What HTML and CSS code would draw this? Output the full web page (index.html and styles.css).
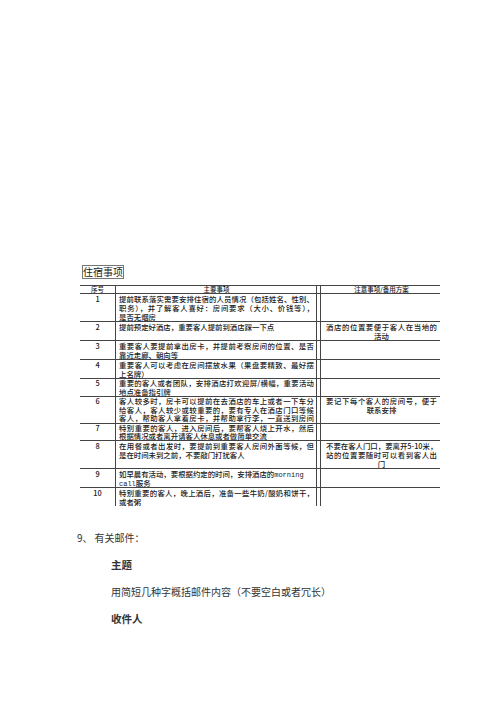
FILE: index.html
```html
<!DOCTYPE html>
<html lang="zh">
<head>
<meta charset="utf-8">
<title>住宿事项</title>
<link rel="stylesheet" href="styles.css">
</head>
<body>
<div class="page">
  <div class="title">住宿事项</div>
  <div class="tbl">
    <div class="row head">
      <div class="c1">序号</div>
      <div class="c2 center">主要事项</div>
      <div class="c3">注意事项/备用方案</div>
    </div>
    <div class="row">
      <div class="c1">1</div>
      <div class="c2"><span class="f">提前联系落实需要安排住宿的人员情况（包括姓名、性别、</span><span class="f">职务），并了解客人喜好：房间要求（大小、价钱等），</span><span class="l">是否无烟房</span></div>
      <div class="c3"></div>
    </div>
    <div class="row">
      <div class="c1">2</div>
      <div class="c2"><span class="l">提前预定好酒店，重要客人提前到酒店踩一下点</span></div>
      <div class="c3"><span class="f">酒店的位置要便于客人在当地的</span><span class="l">活动</span></div>
    </div>
    <div class="row">
      <div class="c1">3</div>
      <div class="c2"><span class="f">重要客人要提前拿出房卡，并提前考察房间的位置、是否</span><span class="l">靠近走廊、朝向等</span></div>
      <div class="c3"></div>
    </div>
    <div class="row">
      <div class="c1">4</div>
      <div class="c2"><span class="f">重要客人可以考虑在房间摆放水果（果盘要精致、最好摆</span><span class="l">上名牌）</span></div>
      <div class="c3"></div>
    </div>
    <div class="row r85">
      <div class="c1">5</div>
      <div class="c2"><span class="f">重要的客人或者团队，安排酒店打欢迎屏/横幅，重要活动</span><span class="l">地点准备指引牌</span></div>
      <div class="c3"></div>
    </div>
    <div class="row r87">
      <div class="c1">6</div>
      <div class="c2"><span class="f">客人较多时，房卡可以提前在去酒店的车上或者一下车分</span><span class="f">给客人，客人较少或较重要的，要有专人在酒店门口等候</span><span class="f">客人，帮助客人拿着房卡，并帮助拿行李，一直送到房间</span></div>
      <div class="c3"><span class="f">要记下每个客人的房间号，便于</span><span class="l">联系安排</span></div>
    </div>
    <div class="row r8">
      <div class="c1">7</div>
      <div class="c2"><span class="f">特别重要的客人，进入房间后，要帮客人烧上开水，然后</span><span class="l">根据情况或者离开请客人休息或者做简单交流</span></div>
      <div class="c3"></div>
    </div>
    <div class="row">
      <div class="c1">8</div>
      <div class="c2"><span class="f">在用餐或者出发时，要提前到重要客人房间外面等候，但</span><span class="l">是在时间未到之前，不要敲门打扰客人</span></div>
      <div class="c3"><span class="f">不要在客人门口，要离开5-10米，</span><span class="f">站的位置要随时可以看到客人出</span><span class="l">门</span></div>
    </div>
    <div class="row">
      <div class="c1">9</div>
      <div class="c2"><span class="l">如早晨有活动，要根据约定的时间，安排酒店的<span class="mono">morning</span></span><span class="l"><span class="mono">call</span>服务</span></div>
      <div class="c3"></div>
    </div>
    <div class="row last">
      <div class="c1">10</div>
      <div class="c2"><span class="f">特别重要的客人，晚上酒后，准备一些牛奶/酸奶和饼干，</span><span class="l">或者粥</span></div>
      <div class="c3"></div>
    </div>
  </div>
  <div class="mail">
    <p class="item"><span class="num">9、</span>有关邮件：</p>
    <p class="sub bold">主题</p>
    <p class="sub">用简短几种字概括邮件内容（不要空白或者冗长）</p>
    <p class="sub bold">收件人</p>
  </div>
</div>
</body>
</html>
```
FILE: styles.css
```css
html, body {
  margin: 0;
  padding: 0;
  background: #ffffff;
}

body {
  width: 500px;
  height: 707px;
  overflow: hidden;
  font-family: "Noto Sans CJK SC", "Noto Sans", sans-serif;
  color: #222;
  line-height: 1;
}

.page {
  padding-top: 265px;
}

.title {
  display: block;
  width: max-content;
  margin-left: 82px;
  border: 1px solid #777;
  font-size: 10px;
  line-height: 12px;
  color: #222;
}

.tbl {
  margin-top: 6px;
  margin-left: 80px;
  width: 360px;
  border-top: 1px solid #444;
  font-size: 7.4px;
  line-height: 9px;
  font-weight: 500;
  color: #1a1a1a;
}

.row {
  display: grid;
  grid-template-columns: 35px 202px 123px;
  border-bottom: 1px solid #444;
}

.row.last {
  border-bottom: none;
}

.c1 {
  text-align: center;
}

.c2 {
  border-left: 1px solid #444;
  border-right: 1px solid #444;
  padding: 0 2px 0 3px;
}

.c3 {
  margin-left: 3px;
  border-left: 1px solid #444;
  padding: 0 3px 0 5px;
  text-align: center;
}

.head {
  font-size: 6.5px;
  line-height: 7px;
}

.center {
  text-align: center;
}

.f {
  display: block;
  height: 9px;
  white-space: nowrap;
  text-align: justify;
  text-align-last: justify;
}

.l {
  display: block;
  height: 9px;
  white-space: nowrap;
}

.r85 {
  line-height: 8.5px;
}

.r85 .f,
.r85 .l {
  height: 8.5px;
}

.r87 {
  line-height: 8.67px;
}

.r87 .f,
.r87 .l {
  height: 8.67px;
}

.r8 {
  line-height: 8px;
}

.r8 .f,
.r8 .l {
  height: 8px;
}

.c2 .l {
  text-align: left;
}

.mono {
  font-family: "Liberation Mono", monospace;
  font-size: 7px;
  line-height: 1;
  vertical-align: baseline;
}

.mail {
  margin-top: 18px;
  font-size: 10px;
  color: #333;
}

.mail p {
  margin: 0;
  line-height: 27px;
  height: 27px;
}

.item {
  padding-left: 77px;
}

.num {
  margin-right: 2px;
}

.sub {
  padding-left: 111px;
}

.bold {
  font-weight: 700;
  font-size: 10.5px;
}
```
